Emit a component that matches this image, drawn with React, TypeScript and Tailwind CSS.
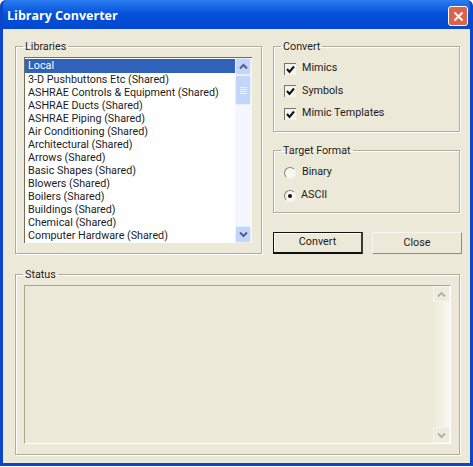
const libraries = [
  "3-D Pushbuttons Etc (Shared)",
  "ASHRAE Controls & Equipment (Shared)",
  "ASHRAE Ducts (Shared)",
  "ASHRAE Piping (Shared)",
  "Air Conditioning (Shared)",
  "Architectural (Shared)",
  "Arrows (Shared)",
  "Basic Shapes (Shared)",
  "Blowers (Shared)",
  "Boilers (Shared)",
  "Buildings (Shared)",
  "Chemical (Shared)",
  "Computer Hardware (Shared)",
];

const Chevron = ({ up, color }: { up?: boolean; color: string }) => (
  <svg width="9" height="7" viewBox="0 0 9 7">
    <path d={up ? "M1 5.5 L4.5 2 L8 5.5" : "M1 1.5 L4.5 5 L8 1.5"} fill="none" stroke={color} strokeWidth="2" />
  </svg>
);

const Group = ({ title, className, children }: { title: string; className: string; children: React.ReactNode }) => (
  <fieldset className={`p-0 border border-[#b0ac9e] shadow-[inset_1px_1px_0_#fff,1px_1px_0_#fff] ${className}`}>
    <legend className="ml-[7px] px-[2px] h-[13px] leading-[13px] -mb-[6px]">{title}</legend>
    {children}
  </fieldset>
);

const Check = ({ label }: { label: string }) => (
  <div className="flex items-center h-[13px]">
    <div className="w-[12px] h-[12px] bg-[#f4f3ee] border-t border-l border-[#77756c] flex items-center justify-center">
      <svg width="9" height="9" viewBox="0 0 9 9">
        <path d="M1 4 L3.5 7 L8 1.5" fill="none" stroke="#111" strokeWidth="2" />
      </svg>
    </div>
    <span className="ml-[6px]">{label}</span>
  </div>
);

const Radio = ({ label, checked }: { label: string; checked?: boolean }) => (
  <div className="flex items-center h-[13px]">
    <div className="w-[12px] h-[12px] rounded-full bg-[#f7f6f1] border border-t-[#85837a] border-l-[#85837a] border-r-[#f4f3ee] border-b-[#f4f3ee] flex items-center justify-center">
      {checked && <div className="w-[4px] h-[4px] rounded-full bg-[#111]" />}
    </div>
    <span className={checked ? "ml-[5px]" : "ml-[6px]"}>{label}</span>
  </div>
);

export default function App() {
  return (
    <div className="w-[473px] h-[467px] bg-white font-['Roboto',sans-serif] text-[10.75px] text-[#1c1c1c]">
      <div className="w-[473px] h-[466px] bg-[#0a3fd0] rounded-t-[6px] border-x-[3px] border-b-[3px] border-[#0c46c8] flex flex-col overflow-hidden">
        <div className="h-[29px] -mx-[3px] shrink-0 bg-gradient-to-b from-[#2a7cf0] via-[#0250d8] to-[#0348d2] flex items-center justify-between pl-[7px] pr-[5px] pt-[3px]">
          <span className="font-['Open_Sans',sans-serif] font-bold text-[12.5px] text-white">Library Converter</span>
          <div className="w-[20px] h-[20px] rounded-[3px] border border-white bg-[#d9644a] flex items-center justify-center">
            <svg width="11" height="11" viewBox="0 0 11 11">
              <path d="M1.5 1.5 L9.5 9.5 M9.5 1.5 L1.5 9.5" stroke="#fff" strokeWidth="2" />
            </svg>
          </div>
        </div>
        <div className="flex-1 bg-[#ece9d8] pt-[11px] pl-[12px]">
          <div className="flex">
            <Group title="Libraries" className="w-[247px] h-[214px]">
              <div className="pl-[8px] pt-[10px]">
                <div className="w-[228px] h-[186px] bg-white border-t border-l border-[#6f6d64] flex">
                  <div className="flex-1 pt-[1px]">
                    <div className="h-[14px] leading-[14px] pl-[3px] bg-[#2f62b8] text-white">Local</div>
                    {libraries.map((name) => (
                      <div key={name} className="h-[13px] leading-[13px] pl-[3px] whitespace-nowrap">
                        {name}
                      </div>
                    ))}
                  </div>
                  <div className="w-[17px] bg-[#f4f7fd] flex flex-col">
                    <div className="h-[17px] w-[16px] bg-[#c4d5fb] border border-[#e8eefc] rounded-[2px] flex items-center justify-center">
                      <Chevron up color="#4d6185" />
                    </div>
                    <div className="h-[30px] w-[16px] bg-[#c4d5fb] border border-[#e8eefc] rounded-[2px] flex flex-col items-center justify-center gap-[1px]">
                      <div className="w-[7px] h-px bg-[#eef3fe]" />
                      <div className="w-[7px] h-px bg-[#eef3fe]" />
                      <div className="w-[7px] h-px bg-[#eef3fe]" />
                      <div className="w-[7px] h-px bg-[#eef3fe]" />
                    </div>
                    <div className="flex-1" />
                    <div className="h-[17px] w-[16px] bg-[#c4d5fb] border border-[#e8eefc] rounded-[2px] flex items-center justify-center">
                      <Chevron color="#4d6185" />
                    </div>
                  </div>
                </div>
              </div>
            </Group>
            <div className="ml-[11px] w-[187px]">
              <Group title="Convert" className="h-[92px]">
                <div className="pl-[10px] pt-[15px] flex flex-col gap-[9.5px]">
                  <Check label="Mimics" />
                  <Check label="Symbols" />
                  <Check label="Mimic Templates" />
                </div>
              </Group>
              <Group title="Target Format" className="mt-[12px] h-[69px]">
                <div className="pl-[10px] pt-[15px] flex flex-col gap-[10px]">
                  <Radio label="Binary" />
                  <Radio label="ASCII" checked />
                </div>
              </Group>
              <div className="mt-[19px] flex gap-[9px] w-[189px]">
                <button className="w-[90px] h-[22px] bg-[#ece9d8] border-t border-l border-r-2 border-b-2 border-[#111] border-r-[#3a3933] shadow-[inset_1px_1px_0_#fff]">
                  Convert
                </button>
                <button className="w-[90px] h-[22px] bg-[#ece9d8] border border-[#f7f6f0] border-r-[#8e8c80] border-b-[#8e8c80]">
                  Close
                </button>
              </div>
            </div>
          </div>
          <Group title="Status" className="mt-[14px] w-[445px] h-[187px]">
            <div className="pl-[8px] pt-[10px]">
              <div className="w-[427px] h-[159px] border border-t-[#a9a694] border-l-[#a9a694] border-r-white border-b-white flex justify-end">
                <div className="w-[17px] h-full bg-gradient-to-r from-[#ece9d8] to-[#f9f8f3] flex flex-col justify-between">
                  <div className="h-[16px] bg-[#eeecdf] border border-[#f6f5ee] flex items-center justify-center">
                    <Chevron up color="#b5b3a6" />
                  </div>
                  <div className="h-[16px] bg-[#eeecdf] border border-[#f6f5ee] flex items-center justify-center">
                    <Chevron color="#b5b3a6" />
                  </div>
                </div>
              </div>
            </div>
          </Group>
        </div>
      </div>
    </div>
  );
}
